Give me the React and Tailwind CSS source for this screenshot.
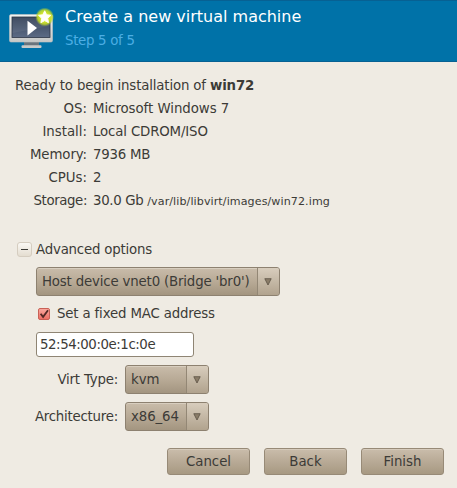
const details = [
  ['OS:', 'Microsoft Windows 7', '', '', 'tracking-[-0.05px]'],
  ['Install:', 'Local CDROM/ISO', '', '', 'tracking-[-0.15px]'],
  ['Memory:', '7936 MB', '', 'tracking-[-0.1px]', 'tracking-[-0.25px]'],
  ['CPUs:', '2', '', '', ''],
  ['Storage:', '30.0 Gb', '/var/lib/libvirt/images/win72.img', 'tracking-[-0.4px]', 'tracking-[-0.35px]'],
];

function MachineIcon() {
  return (
    <svg className="h-[48px] w-[48px]" viewBox="0 0 48 48">
      <defs>
        <linearGradient id="screen" x1="0" y1="0" x2="0" y2="1">
          <stop offset="0" stopColor="#354258" />
          <stop offset="1" stopColor="#5c6b85" />
        </linearGradient>
        <linearGradient id="frame" x1="0" y1="0" x2="0" y2="1">
          <stop offset="0" stopColor="#f4f4f1" />
          <stop offset="1" stopColor="#c5c7c6" />
        </linearGradient>
        <radialGradient id="glow">
          <stop offset="0.35" stopColor="#e2f02c" />
          <stop offset="0.75" stopColor="#c6de22" stopOpacity="0.85" />
          <stop offset="1" stopColor="#a5c83b" stopOpacity="0" />
        </radialGradient>
      </defs>
      <path d="M16 36H31V41H16Z" fill="#69747d" />
      <rect x="13.5" y="39.3" width="20" height="2.7" rx="1" fill="#c7cac9" />
      <rect x="1.5" y="8.5" width="43" height="27.5" rx="1.5" fill="url(#frame)" stroke="#bfc4c4" strokeWidth="0.6" />
      <rect x="4" y="11" width="38" height="20.5" fill="url(#screen)" stroke="#2c3546" strokeWidth="0.8" />
      <path d="M4.5 11.5H41.5V20L4.5 27Z" fill="#fff" opacity="0.06" />
      <path d="M19.5 14.8L29 22L19.5 29.5Z" fill="#fff" />
      <circle cx="36.7" cy="11" r="9.5" fill="url(#glow)" />
      <path d="M36.7 4.8L38.6 8.8L42.9 9.3L39.7 12.3L40.5 16.7L36.7 14.6L32.9 16.7L33.7 12.3L30.5 9.3L34.8 8.8Z" fill="#fffffa" stroke="#fffff0" strokeLinejoin="round" />
    </svg>
  );
}

function Combo({ children, width }) {
  return (
    <div className={`${width} flex h-[29px] overflow-hidden rounded-[3px] border border-[#8d8170] bg-linear-to-b from-[#c9bcaa] via-[#b8aa96] to-[#a39580] shadow-[inset_0_1px_0_#d8cebf]`}>
      <div className="flex min-w-0 flex-1 items-center whitespace-nowrap pl-[5px]">{children}</div>
      <div className="flex w-[22px] items-center justify-center border-l border-[#938775] bg-linear-to-b from-[#d8cdbd] to-[#b1a38e] pr-0.5">
        <svg className="h-2 w-2" viewBox="0 0 8 8"><path d="M0.8 0.7H7.2L4 7Z" fill="#8a7c68" stroke="#5b5144" strokeWidth="0.8" /></svg>
      </div>
    </div>
  );
}

function Button({ children }) {
  return (
    <button className="h-[27px] w-[83px] rounded-[3px] border border-[#978a77] bg-linear-to-b from-[#cabdab] via-[#b8aa96] to-[#a79982] pb-px shadow-[inset_0_1px_0_#d5cabb]">
      {children}
    </button>
  );
}

export default function App() {
  return (
    <main className="flex h-[488px] w-[457px] flex-col overflow-hidden bg-[#efebe3] font-['DejaVu_Sans',sans-serif] text-[13.33px] leading-[23px] text-[#3c3b37]">
      <header className="flex h-[62px] shrink-0 gap-[9px] border-y border-[#076193] bg-[#0072a8] pl-2 pt-[5px]">
        <MachineIcon />
        <div className="-mt-px">
          <h1 className="text-[16px] leading-6 text-white">Create a new virtual machine</h1>
          <p className="tracking-[-0.3px] text-[#4caee4]">Step 5 of 5</p>
        </div>
      </header>

      <section className="pl-[15px] pt-3">
        <p className="tracking-[-0.15px]">Ready to begin installation of <b>win72</b></p>
        <dl>
          {details.map(([label, value, path, labelTracking, valueTracking]) => (
            <div key={label} className="flex gap-[6px]">
              <dt className={`w-[72px] text-right ${labelTracking}`}>{label}</dt>
              <dd className={valueTracking}>{value}{path && <span className="ml-1 text-[11.1px] tracking-[0.09px]">{path}</span>}</dd>
            </div>
          ))}
        </dl>
      </section>

      <section className="pt-[25px]">
        <div className="flex items-center gap-1 pl-[17px]">
          <span className="flex h-[15px] w-[15px] items-center justify-center rounded-[3px] border border-[#d5cdc0] bg-linear-to-b from-[#faf8f4] to-[#e4ddd0]">
            <span className="h-px w-[7px] bg-[#3c3b37]" />
          </span>
          <span className="tracking-[-0.2px]">Advanced options</span>
        </div>
        <div className="pl-9 pt-[6px]">
          <Combo width="w-[244px]"><span className="tracking-[-0.17px]">Host device vnet0 (Bridge 'br0')</span></Combo>
          <div className="mt-[6px] flex items-center gap-[7px] pl-0.5">
            <svg className="h-3 w-3" viewBox="0 0 12 12">
              <defs><linearGradient id="check" x1="0" y1="0" x2="0" y2="1"><stop stopColor="#f9aaa0" /><stop offset="1" stopColor="#ed6d62" /></linearGradient></defs>
              <rect x="0.5" y="0.5" width="11" height="11" rx="1.5" fill="url(#check)" stroke="#c96156" />
              <path d="M2.6 5.7L5.1 8.9L10 2.3" fill="none" stroke="#542a25" strokeWidth="1.8" />
            </svg>
            <span className="tracking-[-0.16px]">Set a fixed MAC address</span>
          </div>
          <div className="mt-[7px] flex h-[25px] w-[158px] items-center rounded-[3px] border border-[#8f8574] bg-white pl-[3px] tracking-[-0.43px]">52:54:00:0e:1c:0e</div>
        </div>
        <div className="mt-2 grid w-[209px] grid-cols-[118px_84px] items-center gap-x-[7px] gap-y-2">
          <span className="text-right tracking-[-0.2px]">Virt Type:</span><Combo width="w-[84px]">kvm</Combo>
          <span className="text-right tracking-[-0.23px]">Architecture:</span><Combo width="w-[84px]"><span className="tracking-[-0.1px]">x86_64</span></Combo>
        </div>
      </section>

      <footer className="mt-[17px] flex justify-end gap-[14px] pr-[13px]">
        <Button>Cancel</Button><Button>Back</Button><Button>Finish</Button>
      </footer>
    </main>
  );
}
